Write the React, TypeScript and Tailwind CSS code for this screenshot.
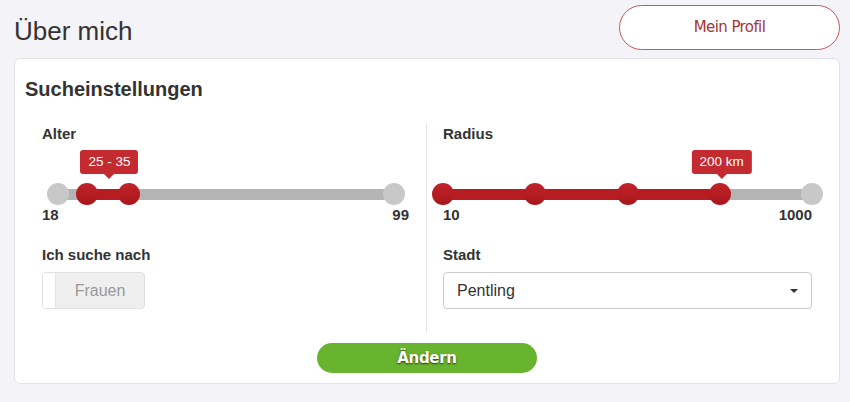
import React from "react";

interface Point {
  at: number;
  active: boolean;
}

interface SliderProps {
  points: Point[];
  fillFrom: number;
  fillTo: number;
  tipAt: number;
  tip: string;
  min: string;
  max: string;
  railClass: string;
}

function Slider({ points, fillFrom, fillTo, tipAt, tip, min, max, railClass }: SliderProps) {
  return (
    <div>
      <div className={"relative h-[56px] " + railClass}>
        <div className="absolute left-0 right-0 top-[39px] h-[11px] bg-[#b4b4b4]" />
        <div
          className="absolute top-[39px] h-[11px] bg-[#b71c21]"
          style={{ left: fillFrom + "%", width: fillTo - fillFrom + "%" }}
        />
        {points.map((p, i) => (
          <div
            key={i}
            className={
              "absolute top-[33px] h-[22px] w-[22px] -translate-x-1/2 rounded-full " +
              (p.active
                ? "bg-gradient-to-b from-[#c0242a] to-[#a8161b]"
                : "bg-[#c8c8c8]")
            }
            style={{ left: p.at + "%" }}
          />
        ))}
        <div
          className="absolute top-0 -translate-x-1/2 flex flex-col items-center"
          style={{ left: tipAt + "%" }}
        >
          <div className="h-[24px] whitespace-nowrap rounded-[3px] bg-[#c42b30] px-[8px] text-[13.5px] leading-[24px] text-white">
            {tip}
          </div>
          <div className="h-0 w-0 border-x-[5px] border-t-[5px] border-x-transparent border-t-[#c42b30]" />
        </div>
      </div>
      <div className="flex h-[18px] justify-between text-[15px] font-bold leading-[18px] text-[#333]">
        <span>{min}</span>
        <span>{max}</span>
      </div>
    </div>
  );
}

export default function App() {
  const alterPoints: Point[] = [
    { at: 0, active: false },
    { at: 100, active: false },
    { at: ((25 - 18) / 81) * 100, active: true },
    { at: ((35 - 18) / 81) * 100, active: true },
  ];
  const radiusPoints: Point[] = [
    { at: 100, active: false },
    { at: 0, active: true },
    { at: 25, active: true },
    { at: 50, active: true },
    { at: 75, active: true },
  ];

  return (
    <div className="h-[402px] w-[850px] bg-[#f4f4f8] pl-[14px] pr-[10px] font-['Liberation_Sans',Arial,sans-serif] text-[#333]">
      <div className="flex items-start justify-between pt-[5px]">
        <h1 className="mt-[11px] text-[26px] leading-[30px] text-[#333]">Über mich</h1>
        <button className="h-[45px] w-[221px] rounded-full border border-[#c4585b] bg-white font-['DejaVu_Sans',sans-serif] text-[15px] tracking-[-0.6px] text-[#a83236]">
          Mein Profil
        </button>
      </div>

      <div className="mt-[8px] rounded-[6px] border border-[#e2e2e8] bg-white pl-[10px] pt-[18px] pb-[10px]">
        <h2 className="text-[20px] font-bold leading-[24px] text-[#333]">Sucheinstellungen</h2>

        <div className="mt-[22px] flex h-[210px]">
          <div className="w-[401px] px-[17px] pt-[2px]">
            <div className="text-[15px] font-bold leading-[18px]">Alter</div>
            <div className="mt-[7px]">
              <Slider
                points={alterPoints}
                fillFrom={alterPoints[2].at}
                fillTo={alterPoints[3].at}
                tipAt={(alterPoints[2].at + alterPoints[3].at) / 2 + 0.5}
                tip="25 - 35"
                min="18"
                max="99"
                railClass="mx-[16px] mr-[15px]"
              />
            </div>
            <div className="mt-[22px] text-[15px] font-bold leading-[18px]">Ich suche nach</div>
            <div className="mt-[8px] flex h-[37px] w-[103px] overflow-hidden rounded-[4px] border border-[#e0e0e0] bg-[#efefef]">
              <div className="w-[13px] border-r border-[#e4e4e4] bg-white" />
              <div className="flex flex-1 items-center justify-center text-[16px] text-[#999]">Frauen</div>
            </div>
          </div>

          <div className="w-[412px] border-l border-[#e6e6e6] pl-[16px] pt-[2px]">
            <div className="w-[369px]">
              <div className="text-[15px] font-bold leading-[18px]">Radius</div>
              <div className="mt-[7px]">
                <Slider
                  points={radiusPoints}
                  fillFrom={0}
                  fillTo={75}
                  tipAt={75.5}
                  tip="200 km"
                  min="10"
                  max="1000"
                  railClass=""
                />
              </div>
              <div className="mt-[22px] text-[15px] font-bold leading-[18px]">Stadt</div>
              <div className="mt-[8px] flex h-[37px] items-center justify-between rounded-[4px] border border-[#cccccc] bg-white pl-[13px] pr-[13px]">
                <span className="text-[16px] text-[#333]">Pentling</span>
                <span className="h-0 w-0 border-x-[4px] border-t-[4px] border-x-transparent border-t-[#333]" />
              </div>
            </div>
          </div>
        </div>

        <div className="mt-[10px] flex justify-center pr-[10px]">
          <button className="h-[30px] w-[220px] rounded-full bg-[#68b42f] font-['DejaVu_Sans',sans-serif] text-[15px] font-bold tracking-[-0.3px] text-white [text-shadow:0_1px_2px_rgba(0,0,0,0.7)]">
            Ändern
          </button>
        </div>
      </div>
    </div>
  );
}
